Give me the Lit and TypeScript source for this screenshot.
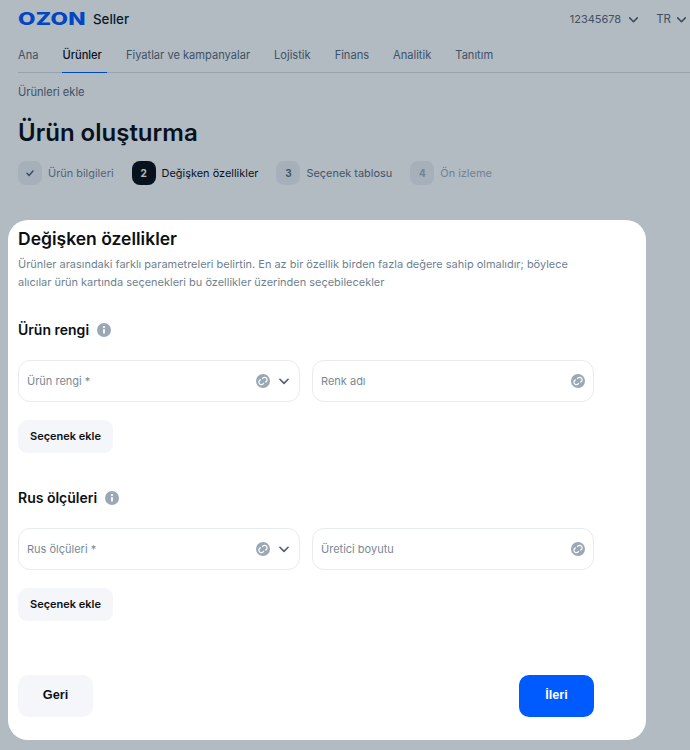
import { LitElement, css, html, svg } from "lit";
import { customElement } from "lit/decorators.js";

const chevron = svg`<path d="M2.5 4.5 6 8l3.5-3.5" fill="none" stroke="currentColor" stroke-width="1.4" stroke-linecap="round" stroke-linejoin="round"/>`;

const navItems = ["Ana", "Ürünler", "Fiyatlar ve kampanyalar", "Lojistik", "Finans", "Analitik", "Tanıtım"];

const steps = [
  { mark: "check", label: "Ürün bilgileri", cls: "done" },
  { mark: "2", label: "Değişken özellikler", cls: "active" },
  { mark: "3", label: "Seçenek tablosu", cls: "next" },
  { mark: "4", label: "Ön izleme", cls: "later" },
];

const sections = [
  { title: "Ürün rengi", first: "Ürün rengi *", second: "Renk adı" },
  { title: "Rus ölçüleri", first: "Rus ölçüleri *", second: "Üretici boyutu" },
];

@customElement("app-root")
export class AppRoot extends LitElement {
  static styles = css`
    :host {
      display: block;
      position: relative;
      width: 690px;
      height: 750px;
      overflow: hidden;
      background: #fff;
      font-family: Inter, "Noto Sans", sans-serif;
      color: #0c0f14;
    }
    .page {
      padding: 0 0 0 18px;
    }
    .top {
      display: flex;
      align-items: center;
      height: 38px;
    }
    .logo {
      display: inline-block;
      width: 68px;
      font-size: 17px;
      line-height: 38px;
      font-weight: 800;
      color: #005bff;
      white-space: nowrap;
      transform: scaleX(1.33);
      transform-origin: left center;
      letter-spacing: 0.2px;
    }
    .seller {
      margin-left: 7px;
      font-size: 13.3px;
      font-weight: 500;
      color: #0c1a2a;
    }
    .account {
      margin-left: auto;
      display: flex;
      align-items: center;
      font-size: 11px;
      color: #5b6b7b;
    }
    .account svg {
      width: 13px;
      height: 13px;
      margin-left: 6px;
      color: #4d5f71;
    }
    .account .lang {
      margin-left: 16px;
      font-size: 11.5px;
    }
    .account .lang + svg {
      margin-left: 4px;
      margin-right: 2px;
    }
    nav {
      display: flex;
      gap: 24px;
      height: 34px;
      border-bottom: 1px solid #d6dde4;
      font-size: 11.1px;
      color: #5b6b7b;
    }
    nav span {
      position: relative;
      line-height: 34px;
    }
    nav .on {
      color: #0c0f14;
      font-weight: 500;
    }
    nav .on::after {
      content: "";
      position: absolute;
      left: 0;
      bottom: -1px;
      width: 45px;
      height: 1px;
      background: #005bff;
    }
    .crumb {
      margin-top: 11px;
      font-size: 11.1px;
      line-height: 16px;
      color: #5b6b7b;
    }
    h1 {
      margin: 17px 0 0;
      font-size: 24px;
      line-height: 32px;
      font-weight: 600;
      color: #0c0f14;
    }
    .steps {
      display: flex;
      gap: 18px;
      margin-top: 12px;
      font-size: 10.95px;
    }
    .step {
      display: flex;
      align-items: center;
      gap: 6px;
    }
    .mark {
      display: flex;
      align-items: center;
      justify-content: center;
      width: 24px;
      height: 24px;
      border-radius: 8px;
      background: #eef1f5;
      font-size: 10px;
      font-weight: 700;
    }
    .mark svg {
      width: 12px;
      height: 12px;
    }
    .done .mark {
      color: #4d5f71;
    }
    .done .text {
      color: #77858f;
    }
    .active .mark {
      background: #0c0f14;
      color: #fff;
    }
    .active .text {
      color: #0c0f14;
    }
    .next .mark,
    .next .text {
      color: #5f6f7f;
    }
    .later .mark,
    .later .text {
      color: #a3afbb;
    }
    .overlay {
      position: absolute;
      inset: 0;
      background: rgba(0, 26, 52, 0.3);
    }
    .modal {
      position: absolute;
      left: 8px;
      top: 220px;
      width: 638px;
      height: 520px;
      box-sizing: border-box;
      padding: 8px 52px 23px 10px;
      display: flex;
      flex-direction: column;
      background: #fff;
      border-radius: 20px;
    }
    h2 {
      margin: 0;
      font-size: 17.5px;
      line-height: 22px;
      font-weight: 600;
      color: #0c0f14;
    }
    .desc {
      margin: 5px 0 0;
      font-size: 10.98px;
      line-height: 18px;
      color: #6f7f8f;
    }
    .section {
      margin-top: 30px;
    }
    .section + .section {
      margin-top: 36px;
    }
    h3 {
      display: flex;
      align-items: center;
      gap: 8px;
      margin: 0;
      font-size: 14px;
      line-height: 18px;
      font-weight: 600;
      color: #0c0f14;
    }
    h3 svg {
      width: 14px;
      height: 14px;
    }
    .fields {
      display: grid;
      grid-template-columns: 282px 282px;
      gap: 12px;
      margin-top: 21px;
    }
    .field {
      display: flex;
      align-items: center;
      height: 42px;
      box-sizing: border-box;
      padding: 0 8px;
      border: 1px solid #e7ebef;
      border-radius: 12px;
      font-size: 11px;
      color: #7a8896;
    }
    .field .grow {
      flex: 1;
    }
    .field .sync {
      width: 14px;
      height: 14px;
    }
    .field .arrow {
      width: 14px;
      height: 14px;
      margin-left: 7px;
      color: #4d5f71;
    }
    button {
      border: none;
      font-family: "Liberation Sans", Arial, sans-serif;
      font-weight: 700;
    }
    .add {
      display: block;
      margin-top: 18px;
      width: 95px;
      height: 33px;
      padding: 0 0 2px;
      border-radius: 9px;
      background: #f5f6fa;
      font-family: Inter, sans-serif;
      font-size: 11px;
      font-weight: 600;
      color: #0c0f14;
    }
    .actions {
      margin-top: auto;
      display: flex;
      justify-content: space-between;
    }
    .actions button {
      width: 75px;
      height: 42px;
      padding: 0 0 3px;
      border-radius: 10px;
      font-size: 12.7px;
    }
    .back {
      background: #f5f6fa;
      color: #0c0f14;
    }
    .forward {
      background: #005bff;
      color: #fff;
    }
  `;

  private info() {
    return html`<svg viewBox="0 0 14 14" aria-hidden="true">
      <circle cx="7" cy="7" r="7" fill="#9aa8b6"/>
      <rect x="6.1" y="6" width="1.8" height="4.6" rx=".5" fill="#fff"/>
      <circle cx="7" cy="4.1" r="1.05" fill="#fff"/>
    </svg>`;
  }

  private sync() {
    return html`<svg class="sync" viewBox="0 0 14 14" aria-hidden="true">
      <circle cx="7" cy="7" r="7" fill="#9aa8b6"/>
      <path d="M6.4 4.6A2.5 2.5 0 1 1 9.6 8.1" fill="none" stroke="#fff" stroke-width="1.2" stroke-linecap="round"/>
      <path d="M7.6 9.4A2.5 2.5 0 1 1 4.4 5.9" fill="none" stroke="#fff" stroke-width="1.2" stroke-linecap="round"/>
    </svg>`;
  }

  private stepMark(mark: string) {
    if (mark !== "check") return mark;
    return html`<svg viewBox="0 0 12 12" aria-hidden="true">
      <path d="M3 6.2 5.2 8.4 9 4" fill="none" stroke="currentColor" stroke-width="1.4" stroke-linecap="round" stroke-linejoin="round"/>
    </svg>`;
  }

  render() {
    return html`
      <div class="page">
        <div class="top">
          <span class="logo">OZON</span>
          <span class="seller">Seller</span>
          <div class="account">
            <span>12345678</span>
            <svg viewBox="0 0 12 12">${chevron}</svg>
            <span class="lang">TR</span>
            <svg viewBox="0 0 12 12">${chevron}</svg>
          </div>
        </div>
        <nav>
          ${navItems.map((n) => html`<span class=${n === "Ürünler" ? "on" : ""}>${n}</span>`)}
        </nav>
        <div class="crumb">Ürünleri ekle</div>
        <h1>Ürün oluşturma</h1>
        <div class="steps">
          ${steps.map(
            (s) => html`<div class="step ${s.cls}">
              <span class="mark">${this.stepMark(s.mark)}</span>
              <span class="text">${s.label}</span>
            </div>`
          )}
        </div>
      </div>
      <div class="overlay"></div>
      <div class="modal">
        <h2>Değişken özellikler</h2>
        <p class="desc">
          Ürünler arasındaki farklı parametreleri belirtin. En az bir özellik birden fazla değere sahip olmalıdır; böylece<br />
          alıcılar ürün kartında seçenekleri bu özellikler üzerinden seçebilecekler
        </p>
        ${sections.map(
          (s) => html`<div class="section">
            <h3>${s.title} ${this.info()}</h3>
            <div class="fields">
              <div class="field">
                <span class="grow">${s.first}</span>
                ${this.sync()}
                <svg class="arrow" viewBox="0 0 12 12">${chevron}</svg>
              </div>
              <div class="field">
                <span class="grow">${s.second}</span>
                ${this.sync()}
              </div>
            </div>
            <button class="add">Seçenek ekle</button>
          </div>`
        )}
        <div class="actions">
          <button class="back">Geri</button>
          <button class="forward">İleri</button>
        </div>
      </div>
    `;
  }
}
